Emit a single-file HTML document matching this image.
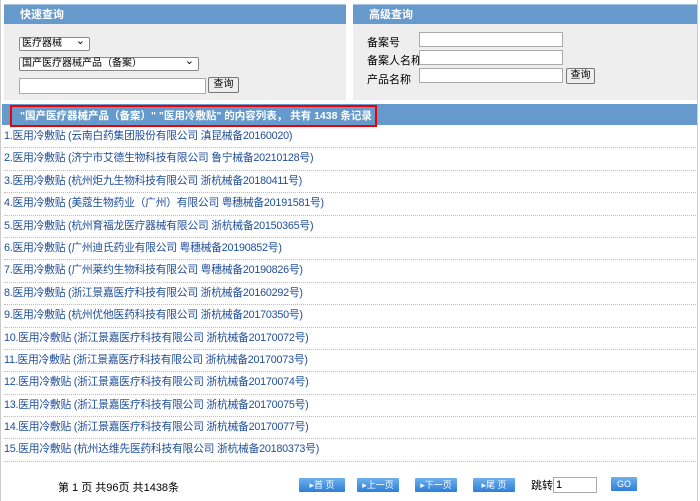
<!DOCTYPE html>
<html><head><meta charset="utf-8"><style>
*{margin:0;padding:0;box-sizing:border-box}
body{width:700px;height:501px;background:#fff;font-family:"Liberation Sans","Noto Sans CJK SC",sans-serif;font-size:11px;color:#000;position:relative;overflow:hidden}
.frame{position:absolute;left:0;top:0;width:698px;height:501px;border-left:1px solid #ccc;border-right:1px solid #ccc}
.panel{position:absolute;top:4px;height:96px;background:#eee}
.ph{height:20px;background:#6699cc;color:#fff;font-weight:bold;font-size:11px;line-height:20px;padding-left:16px;border-top:1px solid #a8c4e0}
.sel{position:absolute;height:14px;border:1px solid #888;border-radius:2px;background:#fff;font-size:10px;line-height:12px;padding-left:2px}
.sel:after{content:"⌄";position:absolute;right:4px;top:-3px;font-size:11px}
.inp{position:absolute;height:14px;border:1px solid #aaa;background:#fff}
.btn{position:absolute;height:16px;border:1px solid #777;background:#eee;font-size:10px;line-height:14px;text-align:center;border-radius:2px}
.lab{position:absolute;font-size:11px}
.bar{position:absolute;left:2px;top:104px;width:695px;height:21px;background:#6699cc}
.red{position:absolute;left:10px;top:105px;width:367px;height:22px;border:2px solid #e00;color:#fff;font-weight:bold;font-size:10.5px;line-height:18px;padding-left:8px;white-space:nowrap}
.rows{position:absolute;left:4px;top:126px;width:692px}
.row{height:22.4px;line-height:21px;border-bottom:1px dotted #bbb;color:#1f4e9a;font-size:10.8px;letter-spacing:-0.25px;white-space:nowrap}
.pg{position:absolute;top:478px;height:14px;width:46px;background:linear-gradient(#6fb0ee,#2c7fd8);color:#fff;font-size:9px;line-height:14px;text-align:center;border-radius:1px}
</style></head><body>
<div class="frame"></div>
<div class="panel" style="left:4px;width:342px">
<div class="ph">快速查询</div>
<div class="sel" style="left:15px;top:33px;width:71px">医疗器械</div>
<div class="sel" style="left:15px;top:53px;width:180px">国产医疗器械产品（备案）</div>
<div class="inp" style="left:15px;top:74px;width:187px;height:16px"></div>
<div class="btn" style="left:204px;top:73px;width:31px">查询</div>
</div>
<div class="panel" style="left:353px;width:344px">
<div class="ph">高级查询</div>
<div class="lab" style="left:14px;top:30px">备案号</div>
<div class="lab" style="left:14px;top:48px">备案人名称</div>
<div class="lab" style="left:14px;top:67px">产品名称</div>
<div class="inp" style="left:66px;top:28px;width:144px;height:15px"></div>
<div class="inp" style="left:66px;top:46px;width:144px;height:15px"></div>
<div class="inp" style="left:66px;top:64px;width:144px;height:15px"></div>
<div class="btn" style="left:213px;top:64px;width:29px">查询</div>
</div>
<div class="bar"></div>
<div class="red">"国产医疗器械产品（备案）" "医用冷敷贴" 的内容列表， 共有 1438 条记录</div>
<div class="rows">
<div class="row">1.医用冷敷贴 (云南白药集团股份有限公司 滇昆械备20160020)</div>
<div class="row">2.医用冷敷贴 (济宁市艾德生物科技有限公司 鲁宁械备20210128号)</div>
<div class="row">3.医用冷敷贴 (杭州炬九生物科技有限公司 浙杭械备20180411号)</div>
<div class="row">4.医用冷敷贴 (美蔻生物药业（广州）有限公司 粤穗械备20191581号)</div>
<div class="row">5.医用冷敷贴 (杭州育福龙医疗器械有限公司 浙杭械备20150365号)</div>
<div class="row">6.医用冷敷贴 (广州迪氏药业有限公司 粤穗械备20190852号)</div>
<div class="row">7.医用冷敷贴 (广州莱约生物科技有限公司 粤穗械备20190826号)</div>
<div class="row">8.医用冷敷贴 (浙江景嘉医疗科技有限公司 浙杭械备20160292号)</div>
<div class="row">9.医用冷敷贴 (杭州优他医药科技有限公司 浙杭械备20170350号)</div>
<div class="row">10.医用冷敷贴 (浙江景嘉医疗科技有限公司 浙杭械备20170072号)</div>
<div class="row">11.医用冷敷贴 (浙江景嘉医疗科技有限公司 浙杭械备20170073号)</div>
<div class="row">12.医用冷敷贴 (浙江景嘉医疗科技有限公司 浙杭械备20170074号)</div>
<div class="row">13.医用冷敷贴 (浙江景嘉医疗科技有限公司 浙杭械备20170075号)</div>
<div class="row">14.医用冷敷贴 (浙江景嘉医疗科技有限公司 浙杭械备20170077号)</div>
<div class="row">15.医用冷敷贴 (杭州达维先医药科技有限公司 浙杭械备20180373号)</div>
</div>
<div class="lab" style="left:58px;top:479px">第 1 页 共96页 共1438条</div>
<div class="pg" style="left:299px">▸首 页</div>
<div class="pg" style="left:357px;width:42px">▸上一页</div>
<div class="pg" style="left:415px;width:42px">▸下一页</div>
<div class="pg" style="left:473px;width:42px">▸尾 页</div>
<div class="lab" style="left:531px;top:477px">跳转</div>
<div class="inp" style="left:553px;top:477px;width:44px;height:16px;font-size:11px;line-height:14px;padding-left:2px">1</div>
<div class="pg" style="left:611px;top:477px;width:26px">GO</div>
</body></html>
